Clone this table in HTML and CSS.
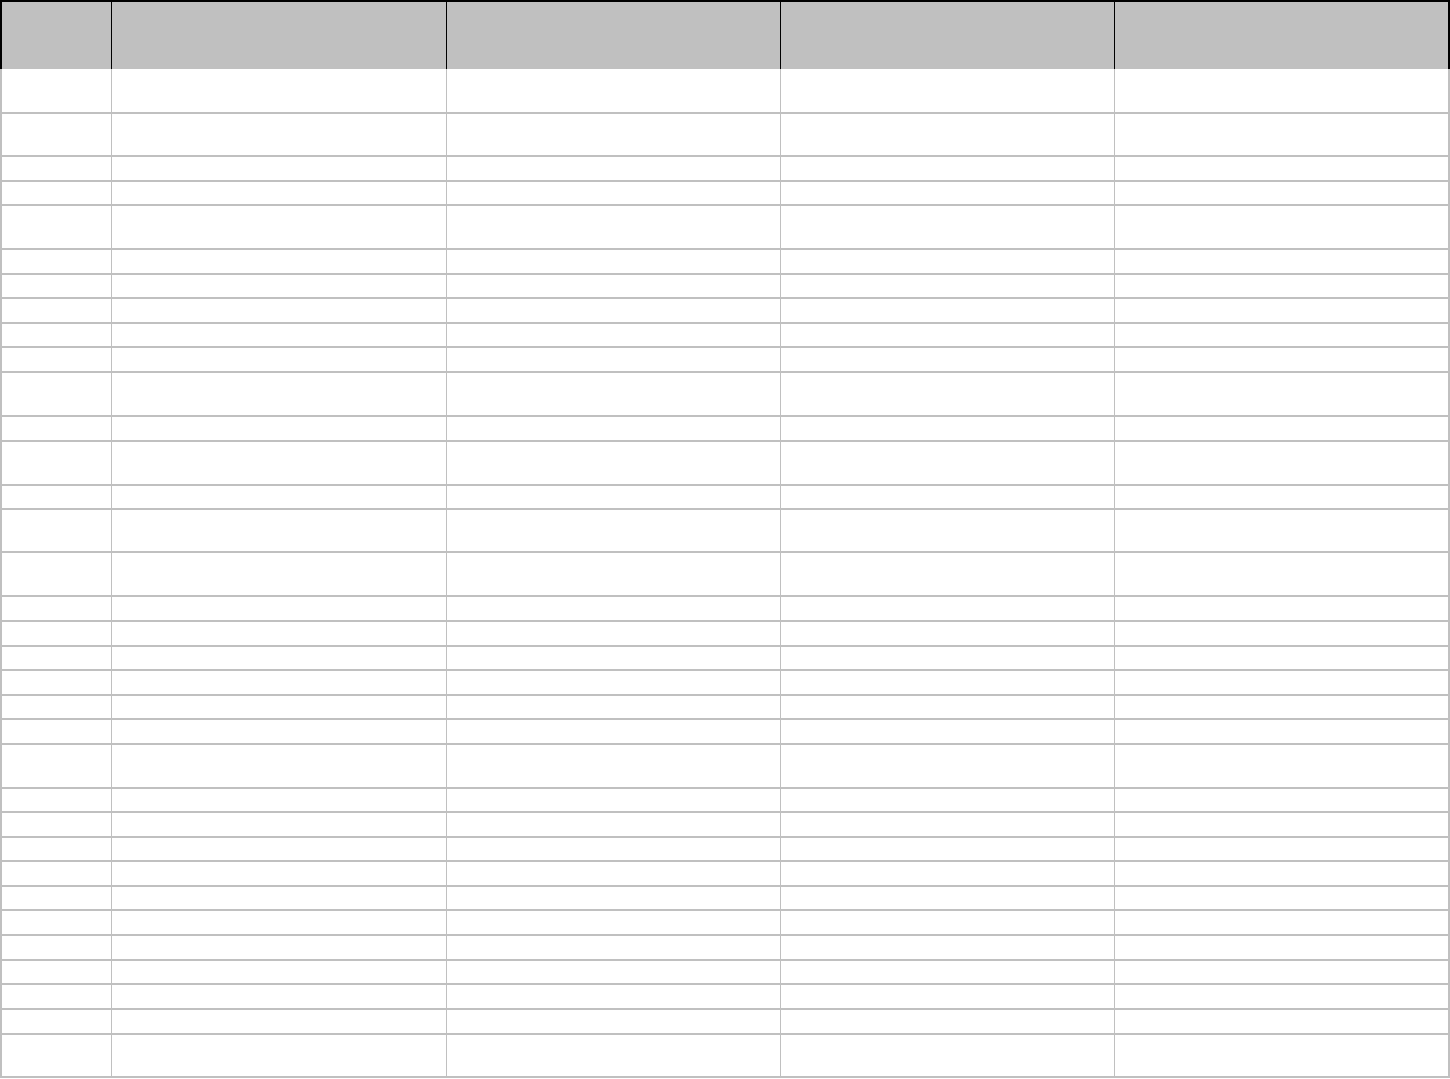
FILE: index.html
```html
<!DOCTYPE html>
<html>
<head>
<meta charset="utf-8">
<link rel="stylesheet" href="styles.css">
</head>
<body>
<div class="sheet">
  <div class="head">
    <div class="cell"></div><div class="cell"></div><div class="cell"></div><div class="cell"></div><div class="cell"></div>
  </div>
  <div class="body">
    <div class="row h43"><div class="cell"></div><div class="cell"></div><div class="cell"></div><div class="cell"></div><div class="cell"></div></div>
    <div class="row h41"><div class="cell"></div><div class="cell"></div><div class="cell"></div><div class="cell"></div><div class="cell"></div></div>
    <div class="row h23"><div class="cell"></div><div class="cell"></div><div class="cell"></div><div class="cell"></div><div class="cell"></div></div>
    <div class="row h22"><div class="cell"></div><div class="cell"></div><div class="cell"></div><div class="cell"></div><div class="cell"></div></div>
    <div class="row h42"><div class="cell"></div><div class="cell"></div><div class="cell"></div><div class="cell"></div><div class="cell"></div></div>
    <div class="row h23"><div class="cell"></div><div class="cell"></div><div class="cell"></div><div class="cell"></div><div class="cell"></div></div>
    <div class="row h22"><div class="cell"></div><div class="cell"></div><div class="cell"></div><div class="cell"></div><div class="cell"></div></div>
    <div class="row h23"><div class="cell"></div><div class="cell"></div><div class="cell"></div><div class="cell"></div><div class="cell"></div></div>
    <div class="row h22"><div class="cell"></div><div class="cell"></div><div class="cell"></div><div class="cell"></div><div class="cell"></div></div>
    <div class="row h23"><div class="cell"></div><div class="cell"></div><div class="cell"></div><div class="cell"></div><div class="cell"></div></div>
    <div class="row h42"><div class="cell"></div><div class="cell"></div><div class="cell"></div><div class="cell"></div><div class="cell"></div></div>
    <div class="row h23"><div class="cell"></div><div class="cell"></div><div class="cell"></div><div class="cell"></div><div class="cell"></div></div>
    <div class="row h42"><div class="cell"></div><div class="cell"></div><div class="cell"></div><div class="cell"></div><div class="cell"></div></div>
    <div class="row h22"><div class="cell"></div><div class="cell"></div><div class="cell"></div><div class="cell"></div><div class="cell"></div></div>
    <div class="row h41"><div class="cell"></div><div class="cell"></div><div class="cell"></div><div class="cell"></div><div class="cell"></div></div>
    <div class="row h42"><div class="cell"></div><div class="cell"></div><div class="cell"></div><div class="cell"></div><div class="cell"></div></div>
    <div class="row h23"><div class="cell"></div><div class="cell"></div><div class="cell"></div><div class="cell"></div><div class="cell"></div></div>
    <div class="row h23"><div class="cell"></div><div class="cell"></div><div class="cell"></div><div class="cell"></div><div class="cell"></div></div>
    <div class="row h22"><div class="cell"></div><div class="cell"></div><div class="cell"></div><div class="cell"></div><div class="cell"></div></div>
    <div class="row h23"><div class="cell"></div><div class="cell"></div><div class="cell"></div><div class="cell"></div><div class="cell"></div></div>
    <div class="row h22"><div class="cell"></div><div class="cell"></div><div class="cell"></div><div class="cell"></div><div class="cell"></div></div>
    <div class="row h23"><div class="cell"></div><div class="cell"></div><div class="cell"></div><div class="cell"></div><div class="cell"></div></div>
    <div class="row h42"><div class="cell"></div><div class="cell"></div><div class="cell"></div><div class="cell"></div><div class="cell"></div></div>
    <div class="row h22"><div class="cell"></div><div class="cell"></div><div class="cell"></div><div class="cell"></div><div class="cell"></div></div>
    <div class="row h23"><div class="cell"></div><div class="cell"></div><div class="cell"></div><div class="cell"></div><div class="cell"></div></div>
    <div class="row h22"><div class="cell"></div><div class="cell"></div><div class="cell"></div><div class="cell"></div><div class="cell"></div></div>
    <div class="row h23"><div class="cell"></div><div class="cell"></div><div class="cell"></div><div class="cell"></div><div class="cell"></div></div>
    <div class="row h22"><div class="cell"></div><div class="cell"></div><div class="cell"></div><div class="cell"></div><div class="cell"></div></div>
    <div class="row h23"><div class="cell"></div><div class="cell"></div><div class="cell"></div><div class="cell"></div><div class="cell"></div></div>
    <div class="row h23"><div class="cell"></div><div class="cell"></div><div class="cell"></div><div class="cell"></div><div class="cell"></div></div>
    <div class="row h22"><div class="cell"></div><div class="cell"></div><div class="cell"></div><div class="cell"></div><div class="cell"></div></div>
    <div class="row h23"><div class="cell"></div><div class="cell"></div><div class="cell"></div><div class="cell"></div><div class="cell"></div></div>
    <div class="row h23"><div class="cell"></div><div class="cell"></div><div class="cell"></div><div class="cell"></div><div class="cell"></div></div>
    <div class="row h41"><div class="cell"></div><div class="cell"></div><div class="cell"></div><div class="cell"></div><div class="cell"></div></div>
  </div>
</div>
</body>
</html>
```

FILE: styles.css
```css
html, body {
  margin: 0;
  padding: 0;
  background: #ffffff;
  font-family: "Liberation Sans", Arial, sans-serif;
}

.sheet {
  width: 1450px;
  box-sizing: border-box;
}

.head {
  display: grid;
  grid-template-columns: 109px 334px 333px 333px 333px;
  column-gap: 1px;
  height: 67px;
  background: #000000;
  border: 2px solid #000000;
  border-bottom: 0;
}

.head .cell {
  background: #c0c0c0;
}

.body {
  border: 2px solid #c0c0c0;
  border-top: 0;
}

.row {
  display: grid;
  grid-template-columns: 109px 334px 333px 333px 333px;
  column-gap: 1px;
  background: #c0c0c0;
  border-bottom: 2px solid #c0c0c0;
}

.row:last-child {
  border-bottom: 0;
}

.row .cell {
  background: #ffffff;
}

.h22 { height: 22px; }
.h23 { height: 23px; }
.h41 { height: 41px; }
.h42 { height: 42px; }
.h43 { height: 43px; }
```
